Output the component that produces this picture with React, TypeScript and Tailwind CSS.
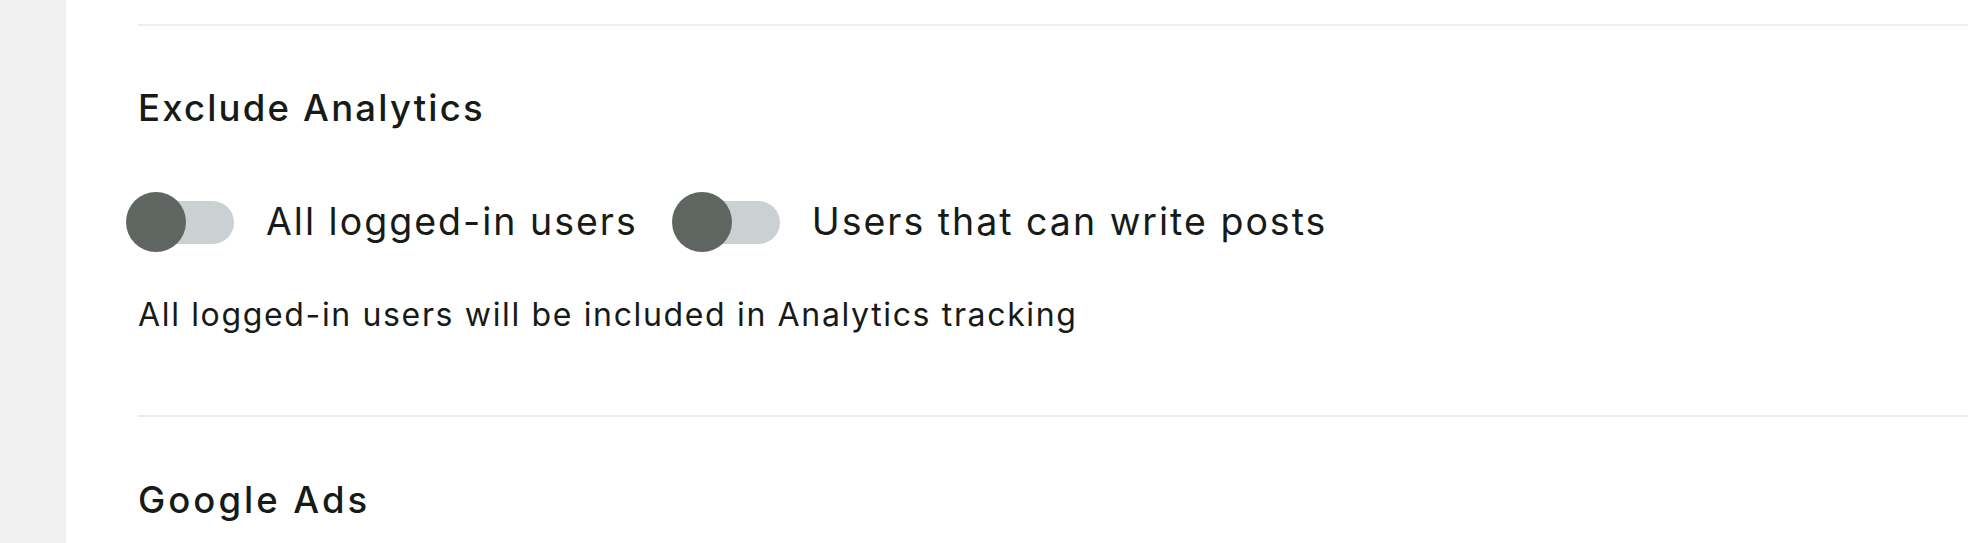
import React from "react";

function Toggle({ label }: { label: string }) {
  return (
    <div className="flex items-center">
      <div className="relative w-[96px] h-[43px] rounded-full bg-[#cbd0d3]">
        <div className="absolute left-[-12px] top-1/2 -translate-y-1/2 w-[60px] h-[60px] rounded-full bg-[#5f6561]" />
      </div>
      <span className="ml-[32px] text-[37.5px] leading-[60px] tracking-[2px] text-[#161b18]">{label}</span>
    </div>
  );
}

export default function App() {
  return (
    <div
      className="flex w-[1968px] h-[543px] overflow-hidden bg-white"
      style={{ fontFamily: "Inter, 'Noto Sans', Arial, sans-serif" }}
    >
      <div className="w-[66px] shrink-0 bg-[#f0f0f1]" />
      <div className="flex-1 pl-[72px] pt-[24px]">
        <section className="border-t-2 border-[#ebeef0]">
          <h3 className="mt-[60px] text-[36.5px] leading-[44px] tracking-[2.2px] font-medium text-[#161b18]">Exclude Analytics</h3>
          <div className="mt-[62px] flex items-center gap-[46px]">
            <Toggle label="All logged-in users" />
            <Toggle label="Users that can write posts" />
          </div>
          <p className="mt-[43px] text-[32px] leading-[40px] tracking-[1.65px] text-[#161b18]">
            All logged-in users will be included in Analytics tracking
          </p>
        </section>
        <section className="mt-[80px] border-t-2 border-[#ebeef0]">
          <h3 className="mt-[61px] text-[36.5px] leading-[44px] tracking-[3px] font-medium text-[#161b18]">Google Ads</h3>
        </section>
      </div>
    </div>
  );
}
